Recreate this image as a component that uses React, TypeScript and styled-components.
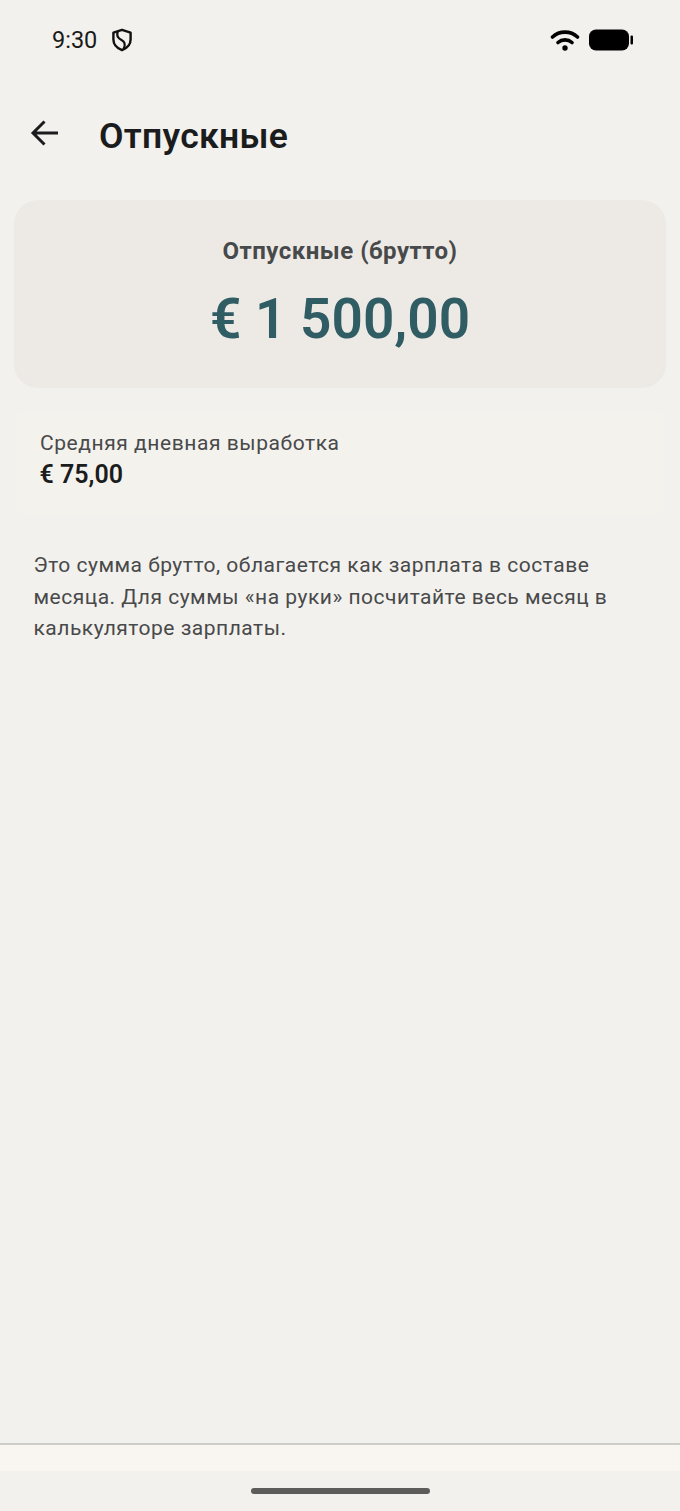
import styled, { createGlobalStyle } from "styled-components";

const GlobalStyle = createGlobalStyle`
  html, body {
    margin: 0;
    padding: 0;
    background: #f3f1ed;
  }
  * {
    box-sizing: border-box;
  }
`;

const Screen = styled.div`
  width: 680px;
  height: 1511px;
  display: flex;
  flex-direction: column;
  background: #f3f1ed;
  font-family: Roboto, "Noto Sans", sans-serif;
  overflow: hidden;
`;

const StatusBar = styled.div`
  height: 80px;
  flex: none;
  display: flex;
  align-items: center;
  justify-content: space-between;
  padding: 0 46px 0 52px;
`;

const StatusGroup = styled.div<{ $gap: number }>`
  display: flex;
  align-items: center;
  gap: ${(p) => p.$gap}px;
`;

const Time = styled.span`
  font-size: 23.5px;
  line-height: 28px;
  color: #1a1a1a;
`;

const Header = styled.header`
  height: 110px;
  flex: none;
  display: flex;
  align-items: center;
  padding: 0 0 0 27px;
  gap: 36px;
`;

const BackButton = styled.button`
  width: 36px;
  height: 36px;
  padding: 0;
  margin-top: -4px;
  border: 0;
  background: none;
  display: flex;
  align-items: center;
  justify-content: center;
`;

const Title = styled.h1`
  margin: 1px 0 0;
  font-size: 35.5px;
  line-height: 44px;
  font-weight: 600;
  letter-spacing: 0.3px;
  color: #1b1c1d;
`;

const Content = styled.main`
  flex: 1;
  padding: 10px 14px 0;
  display: flex;
  flex-direction: column;
`;

const SummaryCard = styled.section`
  height: 188px;
  flex: none;
  border-radius: 24px;
  background: #edeae6;
  display: flex;
  flex-direction: column;
  align-items: center;
  padding-top: 35px;
`;

const SummaryLabel = styled.div`
  font-size: 24px;
  line-height: 32px;
  font-weight: 700;
  letter-spacing: 0.5px;
  color: #48494a;
`;

const SummaryValue = styled.div`
  margin-top: 18px;
  font-size: 55px;
  line-height: 68px;
  font-weight: 600;
  color: #305c64;
`;

const InfoRow = styled.section`
  margin: 22px 2px 0;
  height: 105px;
  flex: none;
  padding: 18px 24px 0;
  border-radius: 12px;
  background: #f4f2ed;
`;

const InfoLabel = styled.div`
  font-size: 21px;
  line-height: 30px;
  letter-spacing: 0.56px;
  color: #48494a;
`;

const InfoValue = styled.div`
  margin: 1px 0 0 -0.5px;
  font-size: 25px;
  line-height: 32px;
  font-weight: 600;
  color: #1b1c1d;
`;

const Note = styled.p`
  margin: 35px 0 0;
  padding: 0 19.5px;
  font-size: 21px;
  line-height: 31.5px;
  letter-spacing: 0.5px;
  color: #48494a;
`;

const BottomBand = styled.div`
  height: 28px;
  flex: none;
  border-top: 2px solid #cfcdc7;
  background: #f9f6f1;
`;

const GestureArea = styled.div`
  height: 40px;
  flex: none;
  display: flex;
  justify-content: center;
  padding-top: 17px;
`;

const GestureHandle = styled.div`
  width: 179px;
  height: 6px;
  border-radius: 3px;
  background: #5c5c5a;
`;

export default function App() {
  return (
    <>
      <GlobalStyle />
      <Screen>
        <StatusBar>
          <StatusGroup $gap={15}>
            <Time>9:30</Time>
            <svg width="20" height="24" viewBox="0 0 20 24" fill="none">
              <path
                d="M10 1.8 L18.6 4.6 V11.5 C18.6 16.5 15 20.2 10 22.2 C5 20.2 1.4 16.5 1.4 11.5 V4.6 Z"
                stroke="#111"
                strokeWidth="2.4"
                strokeLinejoin="round"
              />
              <path d="M5.8 3.8 C4 8 6.5 10.5 9.5 12 C12.5 13.5 14 16.5 11.5 21" stroke="#111" strokeWidth="2.2" />
            </svg>
          </StatusGroup>
          <StatusGroup $gap={8}>
            <svg width="30" height="24" viewBox="0 0 30 24" fill="none">
              <path d="M2.5 9 C9.5 2.5 20.5 2.5 27.5 9" stroke="#000" strokeWidth="3.6" strokeLinecap="round" />
              <path d="M8 14.5 C12 11 18 11 22 14.5" stroke="#000" strokeWidth="3.6" strokeLinecap="round" />
              <circle cx="15" cy="20" r="2.7" fill="#000" />
            </svg>
            <svg width="46" height="24" viewBox="0 0 46 24">
              <rect x="1" y="1.5" width="40" height="21" rx="7" fill="#000" />
              <rect x="42.5" y="7.5" width="2.5" height="9" rx="1" fill="#000" />
            </svg>
          </StatusGroup>
        </StatusBar>
        <Header>
          <BackButton aria-label="Назад">
            <svg width="36" height="36" viewBox="0 0 36 36" fill="none">
              <path
                d="M31 18 H6 M17.5 6.5 L6 18 L17.5 29.5"
                stroke="#1b1c1d"
                strokeWidth="3"
              />
            </svg>
          </BackButton>
          <Title>Отпускные</Title>
        </Header>
        <Content>
          <SummaryCard>
            <SummaryLabel>Отпускные (брутто)</SummaryLabel>
            <SummaryValue>€ 1 500,00</SummaryValue>
          </SummaryCard>
          <InfoRow>
            <InfoLabel>Средняя дневная выработка</InfoLabel>
            <InfoValue>€ 75,00</InfoValue>
          </InfoRow>
          <Note>
            Это сумма брутто, облагается как зарплата в составе месяца. Для суммы «на руки» посчитайте весь месяц в
            калькуляторе зарплаты.
          </Note>
        </Content>
        <BottomBand />
        <GestureArea>
          <GestureHandle />
        </GestureArea>
      </Screen>
    </>
  );
}
